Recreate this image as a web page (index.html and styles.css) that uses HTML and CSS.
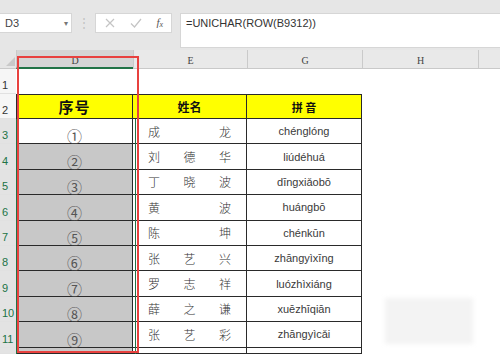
FILE: index.html
```html
<!DOCTYPE html>
<html lang="zh">
<head>
  <meta charset="UTF-8">
  <title>UNICHAR</title>
  <link rel="stylesheet" href="styles.css">
</head>
<body>
<!-- formula bar -->
<div class="topbar">
  <div class="namebox"><span>D3</span><span class="caret">&#9662;</span></div>
  <div class="grip">&#8942;</div>
  <div class="fxbox">
    <svg width="12" height="12" viewBox="0 0 12 12"><path d="M2 2L10 10M10 2L2 10" stroke="#c4c4c4" stroke-width="1.2" fill="none"/></svg>
    <svg width="14" height="12" viewBox="0 0 14 12"><path d="M2 6.5L5.5 10L12 2" stroke="#c4c4c4" stroke-width="1.2" fill="none"/></svg>
    <span class="fx">f<sub>x</sub></span>
  </div>
  <div class="formula">=UNICHAR(ROW(B9312))</div>
</div>

<!-- sheet -->
<div class="sheet">
  <div class="corner"><svg width="9" height="9" viewBox="0 0 9 9"><path d="M9 0V9H0Z" fill="#c9c9c9"/></svg></div>
  <div class="ch active">D</div>
  <div class="ch">E</div>
  <div class="ch">G</div>
  <div class="ch">H</div>
  <div class="ch last"></div>

  <div class="rh">1</div><div class="c"></div><div class="c"></div><div class="c"></div><div class="c"></div><div class="c"></div>

  <div class="rh">2</div>
  <div class="c head d big">序号</div>
  <div class="c head t">姓名</div>
  <div class="c head t small">拼&nbsp;音</div>
  <div class="c"></div><div class="c"></div>

  <div class="rh on">3</div><div class="c d num cur">①</div><div class="c t name"><span>成</span><span>龙</span></div><div class="c t py">chénglóng</div><div class="c"></div><div class="c"></div>
  <div class="rh on">4</div><div class="c d num">②</div><div class="c t name"><span>刘</span><span>德</span><span>华</span></div><div class="c t py">liúdéhuá</div><div class="c"></div><div class="c"></div>
  <div class="rh on">5</div><div class="c d num">③</div><div class="c t name"><span>丁</span><span>晓</span><span>波</span></div><div class="c t py">dīngxiǎobō</div><div class="c"></div><div class="c"></div>
  <div class="rh on">6</div><div class="c d num">④</div><div class="c t name"><span>黄</span><span>波</span></div><div class="c t py">huángbō</div><div class="c"></div><div class="c"></div>
  <div class="rh on">7</div><div class="c d num">⑤</div><div class="c t name"><span>陈</span><span>坤</span></div><div class="c t py">chénkūn</div><div class="c"></div><div class="c"></div>
  <div class="rh on">8</div><div class="c d num">⑥</div><div class="c t name"><span>张</span><span>艺</span><span>兴</span></div><div class="c t py">zhāngyìxīng</div><div class="c"></div><div class="c"></div>
  <div class="rh on">9</div><div class="c d num">⑦</div><div class="c t name"><span>罗</span><span>志</span><span>祥</span></div><div class="c t py">luózhìxiáng</div><div class="c"></div><div class="c"></div>
  <div class="rh on">10</div><div class="c d num">⑧</div><div class="c t name"><span>薛</span><span>之</span><span>谦</span></div><div class="c t py">xuēzhīqiān</div><div class="c"></div><div class="c"></div>
  <div class="rh on">11</div><div class="c d num">⑨</div><div class="c t name"><span>张</span><span>艺</span><span>彩</span></div><div class="c t py">zhāngyìcǎi</div><div class="c"></div><div class="c"></div>
  <div class="rh on"></div><div class="c d num"></div><div class="c t"></div><div class="c t"></div><div class="c"></div><div class="c"></div>
</div>

<!-- overlays -->
<div class="selection"></div>
<div class="marker"></div>
<div class="smudge"></div>
</body>
</html>
```

FILE: styles.css
```css
/* General */
body {
  margin: 0;
  width: 500px;
  height: 354px;
  overflow: hidden;
  position: relative;
  background: #fff;
  font-family: 'Liberation Sans', Arial, 'Noto Sans CJK SC', sans-serif;
  color: #333;
}
/* Formula bar */
.topbar {
  height: 50px;
  box-sizing: border-box;
  padding-top: 13px;
  background: #e6e6e6;
  display: flex;
  align-items: flex-start;
}
.namebox {
  width: 72px;
  height: 20px;
  box-sizing: border-box;
  background: #fff;
  border: 1px solid #d6d6d6;
  border-left: none;
  display: flex;
  align-items: center;
  justify-content: space-between;
  padding: 0 3px 0 5px;
  font-size: 11px;
  color: #444;
}
.caret {
  font-size: 8px;
  color: #777;
}
.grip {
  width: 23px;
  text-align: center;
  font-size: 12px;
  line-height: 20px;
  color: #c2c2c2;
}
.fxbox {
  width: 77px;
  height: 20px;
  box-sizing: border-box;
  background: #fff;
  border: 1px solid #d6d6d6;
  display: flex;
  align-items: center;
  justify-content: space-between;
  padding: 0 8px 0 8px;
}
.fx {
  font-family: 'Liberation Serif', serif;
  font-style: italic;
  font-size: 11px;
  color: #555;
  line-height: 1;
}
.fx sub {
  font-size: 8px;
  vertical-align: -1px;
}
.formula {
  flex: 1;
  height: 35px;
  margin-left: 8px;
  box-sizing: border-box;
  background: #fff;
  border: 1px solid #d6d6d6;
  border-right: none;
  padding: 3px 5px;
  font-size: 11px;
  color: #333;
}
/* Sheet grid */
.sheet {
  display: grid;
  grid-template-columns: 16px 117px 114px 115px 116px 1fr;
  grid-template-rows: 19px 25px 25px repeat(9, 25.4px) 1fr;
  height: 304px;
}
.corner {
  background: #e6e6e6;
  display: flex;
  align-items: flex-end;
  justify-content: flex-end;
  padding: 0 1px 2px 0;
  border-bottom: 1px solid #c9c9c9;
}
.ch {
  background: #e9e9e9;
  border-left: 1px solid #cacaca;
  border-bottom: 1px solid #c9c9c9;
  box-sizing: border-box;
  font-family: 'Liberation Serif', serif;
  font-size: 10px;
  color: #444;
  text-align: center;
  line-height: 22px;
}
.ch.active {
  background: #d5d5d5;
  border-bottom: 2px solid #217346;
  line-height: 21px;
}
.rh {
  background: #f6f6f6;
  border-bottom: 1px solid #e1e1e1;
  font-size: 11px;
  color: #333;
  display: flex;
  align-items: flex-end;
  padding: 0 0 2px 2px;
  box-sizing: border-box;
}
.rh.on {
  background: #e3e3e3;
  color: #217346;
}
.c {
  box-sizing: border-box;
  min-width: 0;
}
/* Table cells */
.d, .t {
  border-right: 1px solid #2a2a2a;
  border-bottom: 1px solid #2a2a2a;
  display: flex;
  align-items: center;
  justify-content: center;
}
.d {
  border-left: 1px solid #2a2a2a;
  background: #c8c8c8;
}
.head {
  background: #ffff00;
  border-top: 1px solid #2a2a2a;
  font-family: 'Noto Sans CJK SC', sans-serif;
  font-weight: 700;
  font-size: 12px;
  color: #111;
}
.head.big {
  font-size: 15px;
  letter-spacing: 1px;
}
.head.small {
  font-size: 11px;
}
.num {
  align-items: flex-end;
  padding-bottom: 0;
  font-family: 'Noto Sans CJK SC', sans-serif;
  font-weight: 400;
  font-size: 15px;
  color: #555;
  line-height: 15px;
}
.num.cur {
  background: #fff;
}
.name {
  justify-content: space-between;
  padding: 0 15px;
  font-family: 'Noto Sans CJK SC', sans-serif;
  font-weight: 300;
  font-size: 12px;
  color: #333;
}
.py {
  font-size: 11px;
  color: #3a3a3a;
}
/* Overlays */
.selection {
  position: absolute;
  left: 16px;
  top: 119px;
  width: 120px;
  height: 240px;
  box-sizing: border-box;
  border-left: 1px solid #217346;
  border-right: 1px solid #217346;
}
.marker {
  position: absolute;
  left: 17px;
  top: 56px;
  width: 122px;
  height: 297px;
  box-sizing: border-box;
  border: 2px solid #e8413f;
}
.smudge {
  position: absolute;
  left: 385px;
  top: 298px;
  width: 88px;
  height: 46px;
  background: #f3f3f3;
  filter: blur(2px);
}
```
